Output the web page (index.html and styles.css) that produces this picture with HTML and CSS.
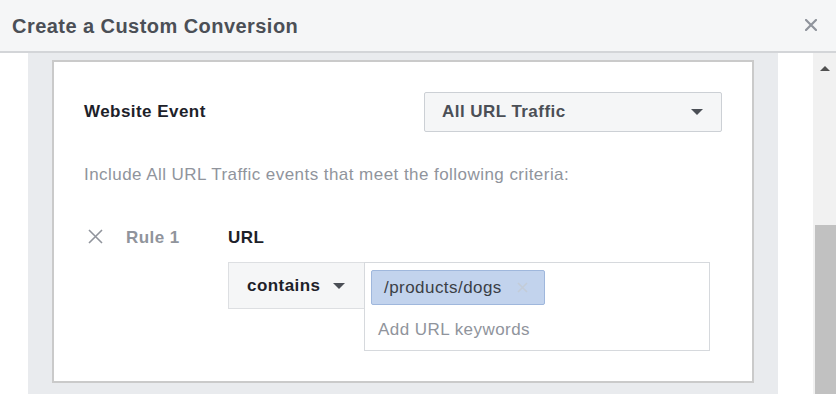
FILE: index.html
```html
<!DOCTYPE html>
<html>
<head>
<meta charset="utf-8">
<link rel="stylesheet" href="styles.css">
</head>
<body>
<div class="dialog">
  <div class="header">
    <div class="title">Create a Custom Conversion</div>
    <svg class="close" width="12" height="12" viewBox="0 0 12 12"><path d="M1 1L11 11M11 1L1 11" stroke="#90949c" stroke-width="2.2" stroke-linecap="square"/></svg>
  </div>
  <div class="body">
    <div class="content">
      <div class="panel">
        <div class="card">
          <div class="event-row">
            <div class="label">Website Event</div>
            <div class="select">
              <span>All URL Traffic</span>
              <span class="caret"></span>
            </div>
          </div>
          <div class="hint">Include All URL Traffic events that meet the following criteria:</div>
          <div class="rule">
            <div class="rule-left">
              <svg class="rule-x" width="15" height="15" viewBox="0 0 15 15"><path d="M1 1L14 14M14 1L1 14" stroke="#90949c" stroke-width="1.6"/></svg>
              <span class="rule-name">Rule 1</span>
            </div>
            <div class="rule-right">
              <div class="field-label">URL</div>
              <div class="cond">
                <div class="op">
                  <span>contains</span>
                  <span class="caret"></span>
                </div>
                <div class="tokens">
                  <div class="token">
                    <span>/products/dogs</span>
                    <svg class="token-x" width="11" height="11" viewBox="0 0 11 11"><path d="M1 1L10 10M10 1L1 10" stroke="#c3ccd8" stroke-width="1.6"/></svg>
                  </div>
                  <div class="placeholder">Add URL keywords</div>
                </div>
              </div>
            </div>
          </div>
        </div>
      </div>
    </div>
    <div class="scrollbar">
      <div class="sb-up"></div>
      <div class="sb-thumb"></div>
    </div>
  </div>
</div>
</body>
</html>
```

FILE: styles.css
```css
html, body {
  margin: 0;
  padding: 0;
  background: #ffffff;
}
body {
  font-family: "Liberation Sans", Arial, sans-serif;
  letter-spacing: 0.45px;
  width: 836px;
  height: 394px;
  overflow: hidden;
}
.dialog {
  width: 836px;
  height: 394px;
  display: flex;
  flex-direction: column;
}
.header {
  height: 51px;
  flex: 0 0 51px;
  background: #f5f6f7;
  border-bottom: 2px solid #d3d5d8;
  display: flex;
  align-items: center;
  justify-content: space-between;
  padding: 0 19px 0 12px;
}
.title {
  font-size: 20px;
  font-weight: bold;
  color: #4b4f56;
  margin-top: 1px;
}
.close {
  margin-top: -2px;
}
.body {
  flex: 1;
  display: flex;
  min-height: 0;
}
.content {
  width: 813px;
  padding-left: 28px;
  box-sizing: border-box;
}
.panel {
  width: 750px;
  height: 100%;
  background: #e9ebee;
  padding: 7px 24px 0 24px;
  box-sizing: border-box;
}
.card {
  background: #ffffff;
  border: 2px solid #cacaca;
  padding: 30px 30px 30px 30px;
  height: 323px;
  box-sizing: border-box;
}
.event-row {
  display: flex;
  justify-content: space-between;
  align-items: center;
}
.label {
  font-size: 17px;
  font-weight: bold;
  color: #1d2129;
}
.select {
  width: 298px;
  height: 40px;
  box-sizing: border-box;
  background: #f5f6f7;
  border: 1px solid #ccd0d5;
  border-radius: 2px;
  display: flex;
  align-items: center;
  justify-content: space-between;
  padding: 0 18px 0 17px;
  font-size: 17px;
  font-weight: bold;
  color: #4b4f56;
}
.caret {
  width: 0;
  height: 0;
  border-left: 6px solid transparent;
  border-right: 6px solid transparent;
  border-top: 6px solid #4b4f56;
}
.hint {
  margin-top: 33px;
  font-size: 17px;
  line-height: 20px;
  color: #90949c;
}
.rule {
  margin-top: 43px;
  display: flex;
}
.rule-left {
  width: 144px;
  display: flex;
  align-items: flex-start;
  padding-left: 4px;
  box-sizing: border-box;
}
.rule-x {
  margin-top: 1px;
}
.rule-name {
  margin-left: 23px;
  font-size: 17px;
  font-weight: bold;
  line-height: 20px;
  color: #90949c;
}
.rule-right {
  display: flex;
  flex-direction: column;
}
.field-label {
  font-size: 17px;
  font-weight: bold;
  line-height: 20px;
  color: #1d2129;
}
.cond {
  margin-top: 14px;
  display: flex;
  align-items: flex-start;
}
.op {
  width: 136px;
  height: 47px;
  box-sizing: border-box;
  background: #f5f6f7;
  border: 1px solid #dddfe2;
  border-right: none;
  display: flex;
  align-items: center;
  padding: 0 0 0 18px;
  gap: 12px;
  font-size: 17px;
  font-weight: bold;
  color: #1d2129;
}
.tokens {
  width: 346px;
  height: 89px;
  box-sizing: border-box;
  border: 1px solid #d6d9dd;
  background: #ffffff;
  padding: 7px 0 0 6px;
}
.token {
  display: inline-flex;
  align-items: center;
  height: 35px;
  width: 174px;
  box-sizing: border-box;
  background: #c2d3ed;
  border: 1px solid #9fb7dc;
  border-radius: 2px;
  padding: 0 0 0 12px;
  font-size: 17px;
  color: #3b3f46;
  gap: 15px;
}
.placeholder {
  margin-top: 15px;
  margin-left: 7px;
  font-size: 17px;
  line-height: 20px;
  color: #90949c;
}
.scrollbar {
  width: 23px;
  position: relative;
  background: #f1f1f1;
}
.sb-up {
  position: absolute;
  left: 7px;
  top: 13px;
  width: 0;
  height: 0;
  border-left: 5px solid transparent;
  border-right: 5px solid transparent;
  border-bottom: 5px solid #505050;
}
.sb-thumb {
  position: absolute;
  left: 2px;
  right: 0;
  top: 172px;
  bottom: 0;
  background: #c1c1c1;
}
```
